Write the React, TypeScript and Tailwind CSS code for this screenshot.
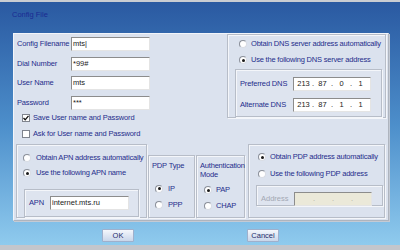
import React from 'react';

const font = { fontFamily: '"Liberation Sans", Arial, sans-serif' };

const Radio = ({ checked = false }: { checked?: boolean }) => (
  <span className="w-[8px] h-[8px] rounded-full bg-white border border-[#8a8f99] border-b-[#d8dce4] border-r-[#d8dce4] flex items-center justify-center shrink-0">
    {checked && <span className="w-[3px] h-[3px] rounded-full bg-[#1a1a1a]" />}
  </span>
);

const Check = ({ checked = false }: { checked?: boolean }) => (
  <span className="w-[8px] h-[8px] bg-white border border-[#7f848e] flex items-center justify-center shrink-0">
    {checked && (
      <svg width="6" height="6" viewBox="0 0 6 6">
        <polyline points="0.5,3 2.2,4.8 5.5,0.8" fill="none" stroke="#111" strokeWidth="1.3" />
      </svg>
    )}
  </span>
);

const RadioRow = ({ label, checked, className = '' }: { label: string; checked?: boolean; className?: string }) => (
  <div className={`flex items-center h-[12px] gap-[4px] ${className}`}>
    <Radio checked={checked} />
    <span className="text-[7.5px] text-[#1f2d8c] whitespace-nowrap leading-none tracking-[-0.2px]">{label}</span>
  </div>
);

const Input = ({ value, width }: { value: string; width: string }) => (
  <div className={`${width} h-[14px] bg-white border border-[#8c8c8c] border-b-[#e4e4e4] border-r-[#e4e4e4] flex items-center px-[1px]`}>
    <span className="text-[7.5px] text-[#1a1a1a] leading-none">{value}</span>
  </div>
);

const IpInput = ({ parts, disabled = false }: { parts: string[]; disabled?: boolean }) => (
  <div
    className={`w-[78px] h-[14px] border border-[#8c8c8c] border-b-[#e4e4e4] border-r-[#e4e4e4] flex items-center pl-[3px] ${
      disabled ? 'bg-[#ebe9d9]' : 'bg-white'
    }`}
  >
    {parts.map((p, i) => (
      <React.Fragment key={i}>
        <span className={`w-[13px] text-center text-[7.5px] leading-none ${disabled ? 'text-[#b0ad9c]' : 'text-[#1a1a1a]'}`}>{p}</span>
        {i < 3 && (
          <span className={`w-[6px] text-center text-[7.5px] leading-none ${disabled ? 'text-[#b0ad9c]' : 'text-[#1a1a1a]'}`}>.</span>
        )}
      </React.Fragment>
    ))}
  </div>
);

const groupBox = 'border border-[#b7bdc8] shadow-[inset_1px_1px_0_#f4f6fa,1px_1px_0_#f4f6fa]';
const label = 'text-[7.5px] text-[#1f2d8c] whitespace-nowrap leading-none tracking-[-0.15px]';

export default function App() {
  return (
    <div className="w-[400px] h-[250px] flex flex-col bg-gradient-to-b from-[#2a59a1] via-[#4d8fcb] to-[#92cdef] border-t-2 border-[#c9ccd2]" style={font}>
      {/* title */}
      <div className="h-[31px] pl-[12px] pt-[9px] flex items-start">
        <span className="text-[7.5px] text-[#1a2a92] leading-none">Config File</span>
      </div>

      {/* main panel */}
      <div className="ml-[13px] w-[376px] h-[188px] bg-[#dbe2ee] border border-[#f2f5fa] border-b-[#aeb4be] border-r-[#aeb4be] shadow-[1px_1px_0_#c4cad4] flex flex-col">
        <div className="h-[110px] flex">
          {/* left fields */}
          <div className="w-[213px] pl-[3px] pt-[3px] flex flex-col">
            {[
              ['Config Filename', 'mts|'],
              ['Dial Number', '*99#'],
              ['User Name', 'mts'],
              ['Password', '***'],
            ].map(([l, v]) => (
              <div key={l} className="flex items-center h-[14px] mb-[5.5px]">
                <span className={`w-[54px] ${label}`}>{l}</span>
                <Input value={v} width="w-[79px]" />
              </div>
            ))}
            <div className="flex items-center h-[12px] gap-[3px] pl-[5px] mt-[-3px]">
              <Check checked />
              <span className={label}>Save User name and Password</span>
            </div>
            <div className="flex items-center h-[12px] gap-[3px] pl-[5px] mt-[4px]">
              <Check />
              <span className={label}>Ask for User name and Password</span>
            </div>
          </div>

          {/* DNS group */}
          <div className={`w-[159px] h-[84px] ${groupBox} flex flex-col pl-[11px] pt-[3px]`}>
            <RadioRow label="Obtain DNS server address automatically" />
            <RadioRow label="Use the following DNS server address" checked className="mt-[4px]" />
            <div className={`ml-[-4px] mt-[3px] w-[147px] h-[48px] ${groupBox} bg-[#dee4ef] flex flex-col pl-[4px] pt-[7px] gap-[7px]`}>
              <div className="flex items-center h-[14px]">
                <span className={`w-[53px] ${label}`}>Preferred DNS</span>
                <IpInput parts={['213', '87', '0', '1']} />
              </div>
              <div className="flex items-center h-[14px]">
                <span className={`w-[53px] ${label}`}>Alternate DNS</span>
                <IpInput parts={['213', '87', '1', '1']} />
              </div>
            </div>
          </div>
        </div>

        {/* bottom row */}
        <div className="flex h-[74px]">
          {/* APN */}
          <div className={`ml-[2px] w-[131px] h-[74px] ${groupBox} flex flex-col pl-[6px] pt-[7px]`}>
            <RadioRow label="Obtain APN address automatically" className="gap-[5px]" />
            <RadioRow label="Use the following APN name" checked className="gap-[5px] mt-[3px]" />
            <div className={`ml-[1px] mt-[10px] w-[115px] h-[28px] ${groupBox} bg-[#dee4ef] flex items-center pl-[4px]`}>
              <span className={`w-[21px] ${label}`}>APN</span>
              <Input value="internet.mts.ru" width="w-[79px]" />
            </div>
          </div>

          {/* PDP Type */}
          <div className={`ml-[1px] mt-[11px] w-[47px] h-[63px] ${groupBox} flex flex-col pl-[3px] pt-[6px]`}>
            <span className={label}>PDP Type</span>
            <RadioRow label="IP" checked className="pl-[3px] gap-[5px] mt-[13px]" />
            <RadioRow label="PPP" className="pl-[3px] gap-[5px] mt-[4px]" />
          </div>

          {/* Authentication */}
          <div className={`ml-[1px] mt-[11px] w-[49px] h-[63px] ${groupBox} flex flex-col pl-[3px] pt-[5px]`}>
            <span className="text-[7.5px] text-[#1f2d8c] leading-[9px] tracking-[-0.2px]">Authentication<br />Mode</span>
            <RadioRow label="PAP" checked className="pl-[4px] gap-[3px] mt-[5px]" />
            <RadioRow label="CHAP" className="pl-[4px] gap-[3px] mt-[4px]" />
          </div>

          {/* PDP address */}
          <div className={`ml-[3px] w-[137px] h-[74px] ${groupBox} flex flex-col pl-[9px] pt-[6px]`}>
            <RadioRow label="Obtain PDP address automatically" checked />
            <RadioRow label="Use the following PDP address" className="mt-[5px]" />
            <div className={`ml-[-2px] mt-[5px] w-[127px] h-[21px] ${groupBox} bg-[#dee4ef] flex items-start pl-[4px] pt-[6px]`}>
              <span className="w-[33px] text-[7.5px] text-[#a3a8b4] leading-[13px]">Address</span>
              <IpInput parts={['', '', '', '']} disabled />
            </div>
          </div>
        </div>
      </div>

      {/* buttons */}
      <div className="flex mt-[8px] h-[13px]">
        <button className="ml-[102px] w-[32px] h-[13px] bg-gradient-to-b from-[#f4f7fc] to-[#c9d6ea] border border-[#9fb0cc] rounded-[1px] text-[7.5px] text-[#1f2d6c] leading-none">
          OK
        </button>
        <button className="ml-[113px] w-[32px] h-[13px] bg-gradient-to-b from-[#f4f7fc] to-[#c9d6ea] border border-[#9fb0cc] rounded-[1px] text-[7.5px] text-[#1f2d6c] leading-none">
          Cancel
        </button>
      </div>

      <div className="mt-auto h-[5px] bg-[#c3c6cc]" />
    </div>
  );
}
